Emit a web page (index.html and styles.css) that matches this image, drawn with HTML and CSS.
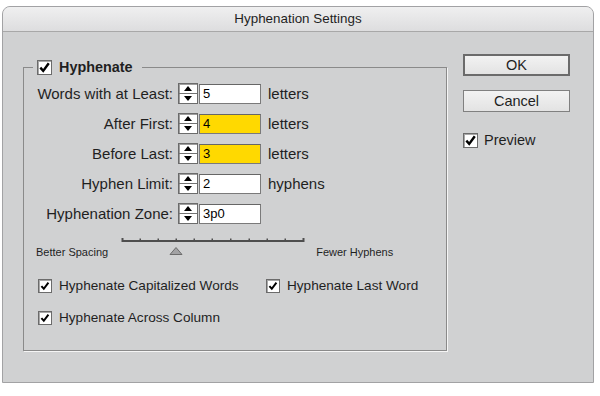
FILE: index.html
```
<!DOCTYPE html>
<html lang='en-US'>
<head>
	<meta charset='UTF-8'>
	<title>Hyphenation Settings</title>
	<link rel="stylesheet" href="styles.css">
</head>
<body>
<div class='window'>
	<div class='titlebar'>Hyphenation Settings</div>

	<div class='content'>
		<fieldset class='group'>
			<legend><span class='check big'><svg viewBox='0 0 14 14'><path d='M2.5 7.2 L5.6 10.6 L11.6 2.4'/></svg></span>Hyphenate</legend>

			<div class='fields'>
				<label>Words with at Least:</label>
				<span class='spinner'><i class='up'></i><i class='down'></i></span>
				<input type='text' value='5' readonly>
				<span class='unit'>letters</span>

				<label>After First:</label>
				<span class='spinner'><i class='up'></i><i class='down'></i></span>
				<input type='text' class='changed' value='4' readonly>
				<span class='unit'>letters</span>

				<label>Before Last:</label>
				<span class='spinner'><i class='up'></i><i class='down'></i></span>
				<input type='text' class='changed' value='3' readonly>
				<span class='unit'>letters</span>

				<label>Hyphen Limit:</label>
				<span class='spinner'><i class='up'></i><i class='down'></i></span>
				<input type='text' value='2' readonly>
				<span class='unit'>hyphens</span>

				<label>Hyphenation Zone:</label>
				<span class='spinner'><i class='up'></i><i class='down'></i></span>
				<input type='text' value='3p0' readonly>
				<span class='unit'></span>
			</div>

			<div class='slider'>
				<span class='end'>Better Spacing</span>
				<svg class='track' width='184' height='20' viewBox='0 0 184 20'>
					<rect x='1' y='4' width='182' height='2' fill='#4e4e4e'/>
					<g fill='#4e4e4e'>
						<rect x='0.5' y='2' width='2' height='4'/>
						<rect x='18.5' y='2.5' width='1.5' height='2'/>
						<rect x='36.5' y='2.5' width='1.5' height='2'/>
						<rect x='54.5' y='2.5' width='1.5' height='2'/>
						<rect x='72.5' y='2.5' width='1.5' height='2'/>
						<rect x='90.5' y='2.5' width='1.5' height='2'/>
						<rect x='109' y='2.5' width='1.5' height='2'/>
						<rect x='127.5' y='2.5' width='1.5' height='2'/>
						<rect x='145.5' y='2.5' width='1.5' height='2'/>
						<rect x='163.5' y='2.5' width='1.5' height='2'/>
						<rect x='181.5' y='2' width='2' height='4'/>
					</g>
					<path d='M49 18.5 L61 18.5 L55 11.5 Z' fill='#a2a2a4' stroke='#6c6c6c' stroke-width='1'/>
				</svg>
				<span class='end'>Fewer Hyphens</span>
			</div>

			<div class='options'>
				<label class='option'><span class='check'><svg viewBox='0 0 14 14'><path d='M2.8 7.2 L5.6 10.2 L11 3'/></svg></span>Hyphenate Capitalized Words</label>
				<label class='option'><span class='check'><svg viewBox='0 0 14 14'><path d='M2.8 7.2 L5.6 10.2 L11 3'/></svg></span>Hyphenate Last Word</label>
				<label class='option'><span class='check'><svg viewBox='0 0 14 14'><path d='M2.8 7.2 L5.6 10.2 L11 3'/></svg></span>Hyphenate Across Column</label>
			</div>
		</fieldset>

		<div class='actions'>
			<button class='default'>OK</button>
			<button>Cancel</button>
			<label class='option preview'><span class='check big'><svg viewBox='0 0 14 14'><path d='M2.5 7.2 L5.6 10.6 L11.6 2.4'/></svg></span>Preview</label>
		</div>
	</div>
</div>
</body>
</html>
```

FILE: styles.css
```
:root {
	--color-window: hsl(220, 3%, 82%);
	--color-window-border: hsl(240, 1%, 64%);
	--color-text: hsl(0, 0%, 12%);
	--color-field-border: hsl(0, 0%, 48%);
	--color-changed: hsl(51, 100%, 50%);
}

html {
	font-family: "Liberation Sans", Arial, sans-serif;
	color: var(--color-text);
	background: white;
}

body {
	margin: 0;
}

.window {
	margin: 6px 0 0 2px;
	width: 592px;
	height: 377px;
	box-sizing: border-box;
	border: 1px solid var(--color-window-border);
	border-radius: 8px 8px 0 0;
	background: var(--color-window);
}

.titlebar {
	height: 24px;
	line-height: 23px;
	text-align: center;
	font-size: 13.4px;
	border-bottom: 1px solid hsl(0, 0%, 66%);
	border-radius: 7px 7px 0 0;
	background: linear-gradient(hsl(240, 2%, 94%), hsl(240, 2%, 87%));
}

.content {
	display: flex;
	align-items: flex-start;
	padding: 22px 0 0 20px;
}

/* the big box round everything */

.group {
	margin: 4px 0 0;
	width: 424px;
	height: 293px;
	box-sizing: border-box;
	padding: 7px 0 0 12px;
	border: 1px solid hsl(0, 0%, 54%);
	box-shadow: 1px 1px 0 hsl(0, 0%, 96%);
}

.group legend {
	display: flex;
	align-items: center;
	gap: 7px;
	height: 18px;
	margin-left: -3px;
	padding: 0 9px 0 4px;
	font-size: 14.4px;
	font-weight: bold;
}

.fields {
	display: grid;
	grid-template-columns: 142px 21px 62px auto;
	grid-auto-rows: 21px;
	row-gap: 9px;
	align-items: center;
	font-size: 15px;
}

.fields label {
	text-align: right;
	padding-right: 5px;
}

.fields input {
	width: 62px;
	height: 20px;
	box-sizing: border-box;
	margin: 0;
	padding: 0 3px;
	font: 13px "Liberation Sans", Arial, sans-serif;
	color: black;
	border: 1px solid var(--color-field-border);
	border-top-color: hsl(0, 0%, 40%);
	background: white;
	outline: none;
}

.fields input.changed {
	background: var(--color-changed);
}

.unit {
	padding-left: 7px;
}

/* stepper arrows left of each box */

.spinner {
	display: flex;
	flex-direction: column;
	width: 20px;
	height: 21px;
	box-sizing: border-box;
	border: 1px solid hsl(0, 0%, 42%);
	box-shadow: inset 1px 1px 0 hsl(0, 0%, 62%);
	background: white;
}

.spinner i {
	flex: 1;
	display: flex;
	align-items: center;
	justify-content: center;
}

.spinner .up {
	border-bottom: 1px solid hsl(0, 0%, 45%);
}

.spinner .up::before,
.spinner .down::before {
	content: '';
	border-left: 4px solid transparent;
	border-right: 4px solid transparent;
}

.spinner .up::before {
	border-bottom: 5px solid black;
}

.spinner .down::before {
	border-top: 5px solid black;
}

/* spacing / hyphens slider */

.slider {
	display: flex;
	align-items: flex-end;
	margin-top: 12px;
	height: 20px;
}

.slider .end {
	font-size: 11px;
	line-height: 12px;
	margin-bottom: -2px;
}

.slider .track {
	margin: 0 11px 0 13px;
}

/* checkboxes */

.options {
	display: grid;
	grid-template-columns: 228px auto;
	row-gap: 17px;
	margin-top: 22px;
	padding-left: 2px;
}

.option {
	display: flex;
	align-items: center;
	gap: 7px;
	font-size: 13.6px;
	line-height: 15px;
}

.check {
	display: inline-flex;
	width: 14px;
	height: 14px;
	box-sizing: border-box;
	border: 1px solid hsl(0, 0%, 42%);
	box-shadow: inset 1px 1px 0 hsl(0, 0%, 66%);
	background: white;
}

.check.big {
	width: 15px;
	height: 15px;
}

.check svg {
	width: 100%;
	height: 100%;
	fill: none;
	stroke: black;
	stroke-width: 2.3;
}

.check.big svg {
	stroke-width: 2.6;
}

/* OK / Cancel / Preview */

.actions {
	display: flex;
	flex-direction: column;
	margin-left: 16px;
	width: 107px;
}

.actions button {
	height: 22px;
	margin: 0 0 14px;
	padding: 0;
	font: 14.5px "Liberation Sans", Arial, sans-serif;
	color: var(--color-text);
	border: 1px solid hsl(0, 0%, 50%);
	background: linear-gradient(hsl(0, 0%, 95%), hsl(0, 0%, 89%));
}

.actions button.default {
	border: 2px solid hsl(0, 0%, 42%);
}

.preview {
	margin-top: 7px;
	font-size: 14.5px;
	gap: 6px;
}
```
